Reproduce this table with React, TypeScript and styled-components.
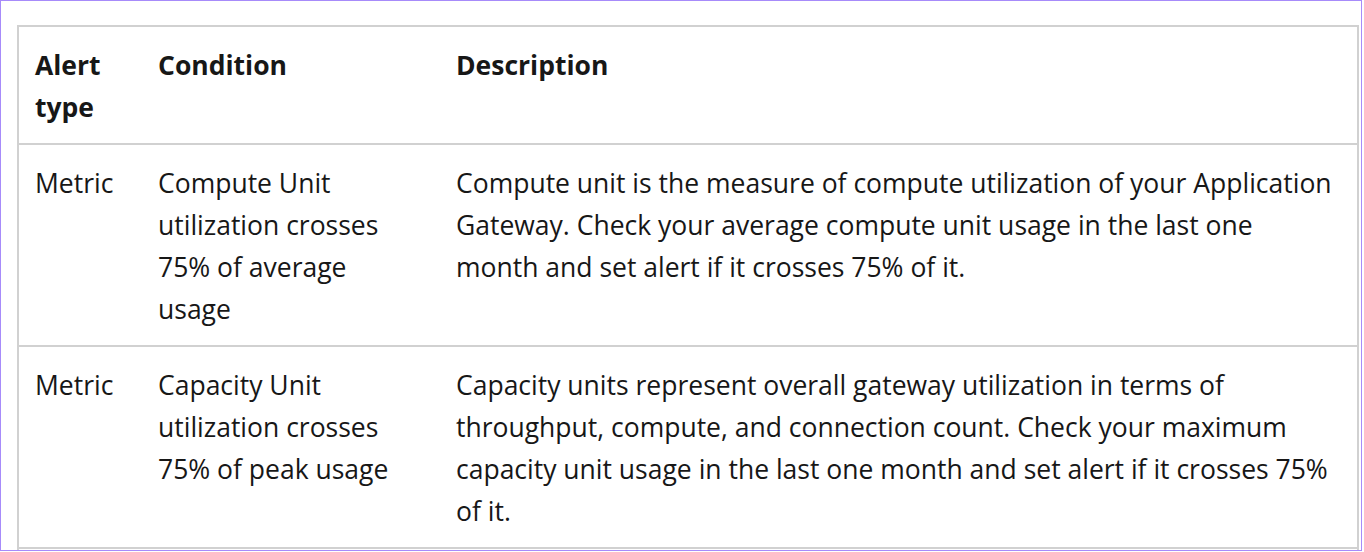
import React from "react";
import styled, { createGlobalStyle } from "styled-components";

const GlobalStyle = createGlobalStyle`
  html, body { margin: 0; padding: 0; background: #ffffff; }
`;

const Frame = styled.div`
  box-sizing: border-box;
  width: 1362px;
  height: 551px;
  border: 1px solid #a78bfa;
  padding: 24px 0 0 16px;
  overflow: hidden;
  background: #ffffff;
`;

const Table = styled.table`
  width: 1342px;
  table-layout: fixed;
  border-collapse: separate;
  border-spacing: 0;
  border: 2px solid #d1d1d1;
  font-family: "Open Sans", "Noto Sans", sans-serif;
  font-size: 26.5px;
  line-height: 42px;
  color: #171717;
`;

const HeadCell = styled.th`
  text-align: left;
  vertical-align: top;
  font-weight: 700;
  padding: 17px 16px 15px;
`;

const Cell = styled.td`
  vertical-align: top;
  padding: 17px 16px 15px;
  border-top: 2px solid #d1d1d1;
`;

const FillerCell = styled.td`
  height: 40px;
  padding: 0;
  border-top: 2px solid #d1d1d1;
`;

type Row = { type: string; condition: string; description: string };

const rows: Row[] = [
  {
    type: "Metric",
    condition: "Compute Unit utilization crosses 75% of average usage",
    description:
      "Compute unit is the measure of compute utilization of your Application Gateway. Check your average compute unit usage in the last one month and set alert if it crosses 75% of it.",
  },
  {
    type: "Metric",
    condition: "Capacity Unit utilization crosses 75% of peak usage",
    description:
      "Capacity units represent overall gateway utilization in terms of throughput, compute, and connection count. Check your maximum capacity unit usage in the last one month and set alert if it crosses 75% of it.",
  },
];

export default function App() {
  return (
    <>
      <GlobalStyle />
      <Frame>
        <Table>
          <colgroup>
            <col style={{ width: 123 }} />
            <col style={{ width: 298 }} />
            <col />
          </colgroup>
          <thead>
            <tr>
              <HeadCell>Alert type</HeadCell>
              <HeadCell>Condition</HeadCell>
              <HeadCell>Description</HeadCell>
            </tr>
          </thead>
          <tbody>
            {rows.map((r, i) => (
              <tr key={i}>
                <Cell>{r.type}</Cell>
                <Cell>{r.condition}</Cell>
                <Cell>{r.description}</Cell>
              </tr>
            ))}
            <tr aria-hidden="true">
              <FillerCell />
              <FillerCell />
              <FillerCell />
            </tr>
          </tbody>
        </Table>
      </Frame>
    </>
  );
}
